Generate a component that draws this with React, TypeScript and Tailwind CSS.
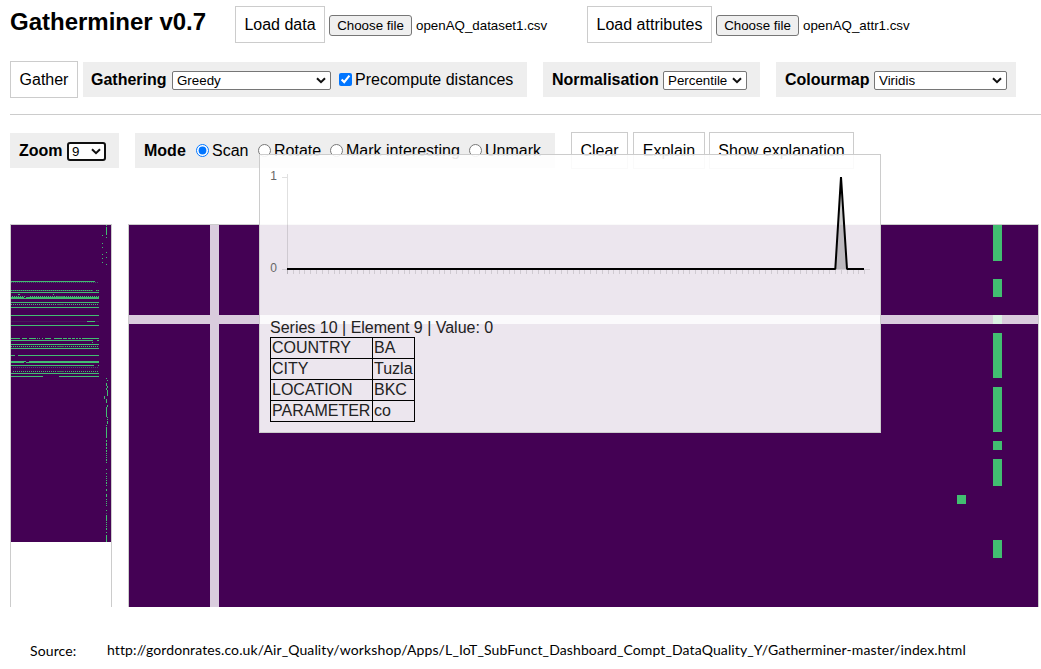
import type { ReactNode } from "react";

const PURPLE = "#440154";
const GREEN = "#42be71";
const DIM = "#44506a";

type Run = [x: number, y: number, w: number, h: number];

/* Horizontal runs of the overview map: [y, from, to] */
const overviewRows: [number, number, number][] = [
  [56, 0, 84], [67, 0, 88], [69, 7, 9], [69, 42, 43], [72, 0, 13], [72, 15, 88], [73, 0, 88],
  [77, 0, 88], [82, 0, 88], [90, 0, 88], [96, 76, 84], [100, 0, 88],
  [113, 0, 9], [113, 11, 16], [113, 18, 25], [113, 26, 27], [113, 28, 29], [113, 31, 32],
  [113, 34, 40], [113, 43, 51], [113, 52, 56], [113, 57, 60], [113, 61, 64], [113, 65, 67],
  [113, 68, 70], [113, 71, 88],
  [115, 0, 82], [115, 86, 88], [117, 81, 82], [119, 0, 88], [123, 0, 88],
  [130, 0, 4], [130, 7, 88], [136, 0, 15], [136, 18, 88], [137, 0, 13], [137, 15, 88],
  [140, 0, 83], [140, 87, 88], [148, 0, 88], [151, 0, 32], [151, 48, 88],
];

/* Dotted rows: [y, from, to, bright] */
const overviewDots: [number, number, number, boolean][] = [
  [57, 0, 88, false], [65, 0, 82, true], [65, 85, 88, true], [71, 1, 14, true], [71, 19, 88, true],
  [79, 0, 88, true], [121, 0, 88, true], [142, 2, 88, false], [146, 2, 88, true],
];

/* Vertical runs of the overview map: [x, from, to] */
const overviewCols: [number, number, number][] = [
  [95, 0, 1], [95, 2, 10], [91, 10, 11], [95, 12, 13], [91, 18, 19], [91, 22, 23], [95, 27, 28],
  [91, 29, 30], [95, 32, 33], [91, 33, 34], [91, 37, 38], [95, 39, 40], [95, 153, 154],
  [96, 155, 156], [95, 158, 161], [96, 161, 163], [95, 163, 165], [96, 165, 171], [93, 171, 174],
  [95, 174, 178], [96, 180, 182], [95, 182, 192], [96, 192, 193], [96, 194, 195], [96, 196, 199],
  [95, 200, 201], [95, 202, 213], [95, 215, 217], [95, 218, 220], [95, 220, 221], [95, 222, 224],
  [95, 225, 227], [95, 228, 229], [95, 230, 231], [95, 232, 233], [95, 234, 236], [95, 237, 238],
  [95, 244, 245], [95, 248, 249], [95, 251, 252], [95, 253, 254], [95, 255, 256], [95, 257, 259],
  [95, 260, 261], [95, 264, 266], [95, 269, 272], [95, 274, 275], [95, 276, 277], [95, 278, 279],
  [95, 280, 281], [95, 285, 286], [95, 290, 296], [95, 297, 298], [95, 299, 300], [95, 301, 302],
  [95, 303, 305], [95, 307, 308], [95, 310, 317],
];

/* Cells of the detail map: column, row, width and height in cells */
const CELL = 9;
const detailRuns: Run[] = [
  [96, 0, 1, 4], [96, 6, 1, 2], [96, 10, 1, 1], [96, 12, 1, 5], [96, 18, 1, 5],
  [96, 24, 1, 1], [96, 26, 1, 3], [92, 30, 1, 1], [96, 35, 1, 2],
];

const attributes = [
  ["COUNTRY", "BA"],
  ["CITY", "Tuzla"],
  ["LOCATION", "BKC"],
  ["PARAMETER", "co"],
];

function Button({ className, children }: { className: string; children: ReactNode }) {
  return (
    <button className={`h-[37px] shrink-0 border border-[#ccc] bg-white text-center whitespace-nowrap ${className}`}>
      {children}
    </button>
  );
}

function Panel({ className, children }: { className: string; children: ReactNode }) {
  return <div className={`flex h-[35px] shrink-0 items-center bg-[#eee] whitespace-nowrap ${className}`}>{children}</div>;
}

function Select({ value, className, focused = false }: { value: string; className: string; focused?: boolean }) {
  return (
    <div className={`relative mt-0.5 h-[19px] shrink-0 ${className}`}>
      <select
        defaultValue={value}
        className={`block h-full w-full appearance-none bg-white text-[13.333px] leading-[15px] text-black outline-none ${
          focused ? "rounded-[3px] border-2 border-[#101010] pl-[3px]" : "rounded-[2px] border border-[#767676] pl-1"
        }`}
      >
        <option>{value}</option>
      </select>
      <svg className="pointer-events-none absolute top-[6px] right-[5px] h-[7px] w-[10px]" viewBox="0 0 10 7">
        <path d="M1 1.2 5 5.2 9 1.2" fill="none" stroke="#101010" strokeWidth="2" />
      </svg>
    </div>
  );
}

function FilePicker({ file }: { file: string }) {
  return (
    <div className="mt-[9px] ml-1 flex h-[21px] shrink-0 items-center text-[13.333px] whitespace-nowrap">
      <button className="h-[21px] w-[83px] rounded-[3px] border border-[#767676] bg-[#efefef] leading-[18px]">
        Choose file
      </button>
      <span className="ml-1">{file}</span>
    </div>
  );
}

function Mode({ label, className, checked = false }: { label: string; className: string; checked?: boolean }) {
  return (
    <label className={`flex shrink-0 items-center ${className}`}>
      <input type="radio" name="mode" defaultChecked={checked} className="mr-[3px] h-[13px] w-[13px]" />
      {label}
    </label>
  );
}

function Overview() {
  return (
    <div className="h-[383px] w-[102px] shrink-0 border border-b-0 border-[#ccc]">
      <svg className="block" width="100" height="317" shapeRendering="crispEdges">
        <rect width="100" height="317" fill={PURPLE} />
        {overviewDots.map(([y, from, to, bright]) => (
          <g key={`${y}-${from}`}>
            {y === 65 && <rect x={from} y={y} width={to - from} height="1" fill="#436066" />}
            <line
              x1={from} x2={to} y1={y + 0.5} y2={y + 0.5}
              stroke={bright ? GREEN : DIM} strokeDasharray="1 1"
            />
            {to === 88 && from < 40 && bright && (
              <rect x="46" y={y} width="7" height="1" fill="#43755f" />
            )}
          </g>
        ))}
        <rect y="96" width="88" height="1" fill="#441b58" />
        {overviewRows.map(([y, from, to]) => (
          <rect key={`${y}-${from}`} x={from} y={y} width={to - from} height="1" fill={GREEN} />
        ))}
        {overviewCols.map(([x, from, to]) => (
          <rect key={`${x}-${from}`} x={x} y={from} width="1" height={to - from} fill={GREEN} />
        ))}
        <rect x="95" y="288" width="1" height="1" fill={DIM} />
      </svg>
    </div>
  );
}

function Detail() {
  return (
    <div className="h-[383px] w-[911px] shrink-0 border border-b-0 border-[#ccc]">
      <svg className="block" width="909" height="382" shapeRendering="crispEdges">
        <rect width="909" height="382" fill={PURPLE} />
        {detailRuns.map(([x, y, w, h]) => (
          <rect key={`${x}-${y}`} x={x * CELL} y={y * CELL} width={w * CELL} height={h * CELL} fill={GREEN} />
        ))}
        <path d="M81 0h9v90h819v9H90v283h-9V99H0v-9h81Z" fill="#fff" fillOpacity="0.8" />
      </svg>
    </div>
  );
}

function SeriesChart() {
  const step = 5.83;
  return (
    <svg className="absolute top-0 left-0" width="620" height="140">
      <g shapeRendering="crispEdges" stroke="#000" strokeOpacity="0.12">
        <path d="M27.5 19V119M22 22.5h5M22 114.5h588" />
        {Array.from({ length: 100 }, (_, i) => (
          <line key={i} x1={27.5 + i * step} x2={27.5 + i * step} y1="115" y2="119" />
        ))}
      </g>
      <path d="M575.5 114 581 23 587 114Z" fill="#000" fillOpacity="0.2" />
      <path d="M27 114H575.3L581 22 587 114H604" fill="none" stroke="#000" strokeWidth="2" strokeLinejoin="bevel" />
    </svg>
  );
}

function Tooltip() {
  return (
    <div className="absolute top-[154px] left-[259px] h-[279px] w-[622px] border border-[#ccc] bg-white/90">
      <SeriesChart />
      <div className="flex h-[164px] w-[17px] flex-col items-end pt-[14px] text-[12px] leading-[14px] text-[#666]">
        <span>1</span>
        <span className="mt-[78px]">0</span>
      </div>
      <div className="pl-[10px] leading-[18px] text-[#222]">
        <p>Series 10 | Element 9 | Value: 0</p>
        <table className="border-collapse">
          <tbody>
            {attributes.map(([name, value]) => (
              <tr key={name} className="h-[21px]">
                <td className="w-[102px] border border-black px-px py-0">{name}</td>
                <td className="w-[42px] border border-black px-px py-0">{value}</td>
              </tr>
            ))}
          </tbody>
        </table>
      </div>
    </div>
  );
}

export default function App() {
  return (
    <div className="relative h-[669px] w-[1041px] overflow-hidden bg-white pl-[10px] font-['Liberation_Sans',Arial,sans-serif] text-[16px] leading-[18px] text-black">
      <header className="flex h-[61px] items-start pt-[6px]">
        <h1 className="mt-[2px] w-[225px] shrink-0 text-[24px] leading-7 font-bold whitespace-nowrap">Gatherminer v0.7</h1>
        <Button className="w-[90px]">Load data</Button>
        <FilePicker file="openAQ_dataset1.csv" />
        <div className="ml-auto flex w-[454px] shrink-0 items-start">
          <Button className="w-[125px]">Load attributes</Button>
          <FilePicker file="openAQ_attr1.csv" />
        </div>
      </header>

      <div className="flex h-[53px] items-start">
        <Button className="w-[68px]">Gather</Button>
        <Panel className="mt-px ml-[5px] w-[444px] pl-[8px]">
          <b className="w-[81px]">Gathering</b>
          <Select value="Greedy" className="w-[159px]" />
          <label className="flex items-center">
            <input type="checkbox" defaultChecked className="mr-[3px] ml-2 h-[13px] w-[13px]" />
            Precompute distances
          </label>
        </Panel>
        <Panel className="mt-px ml-4 w-[217px] pl-[9px]">
          <b className="w-[111px]">Normalisation</b>
          <Select value="Percentile" className="w-[84px]" />
        </Panel>
        <Panel className="mt-px ml-4 w-[240px] pl-[9px]">
          <b className="w-[89px]">Colourmap</b>
          <Select value="Viridis" className="w-[133px]" />
        </Panel>
      </div>

      <hr className="border-t border-[#ccc]" />

      <div className="flex h-[109px] items-start pt-[17px]">
        <Panel className="mt-px w-[109px] pl-[9px]">
          <b className="w-[48px]">Zoom</b>
          <Select value="9" className="w-[39px]" focused />
        </Panel>
        <Panel className="mt-px ml-4 w-[420px] pl-[9px]">
          <b className="w-[52px]">Mode</b>
          <Mode label="Scan" className="w-[62px]" checked />
          <Mode label="Rotate" className="w-[72px]" />
          <Mode label="Mark interesting" className="w-[139px]" />
          <Mode label="Unmark" className="" />
        </Panel>
        <Button className="ml-4 w-[57px]">Clear</Button>
        <Button className="ml-[5px] w-[72px]">Explain</Button>
        <Button className="ml-1 w-[145px]">Show explanation</Button>
      </div>

      <main className="flex gap-4">
        <Overview />
        <Detail />
      </main>

      <footer className="flex pt-[34px] pl-5 font-[Lato,sans-serif] text-[14px] tracking-[0.12px] whitespace-nowrap">
        <span className="mt-px w-[77px]">Source:</span>
        <span>
          http://gordonrates.co.uk/Air_Quality/workshop/Apps/L_IoT_SubFunct_Dashboard_Compt_DataQuality_Y/Gatherminer-master/index.html
        </span>
      </footer>

      <Tooltip />
    </div>
  );
}
